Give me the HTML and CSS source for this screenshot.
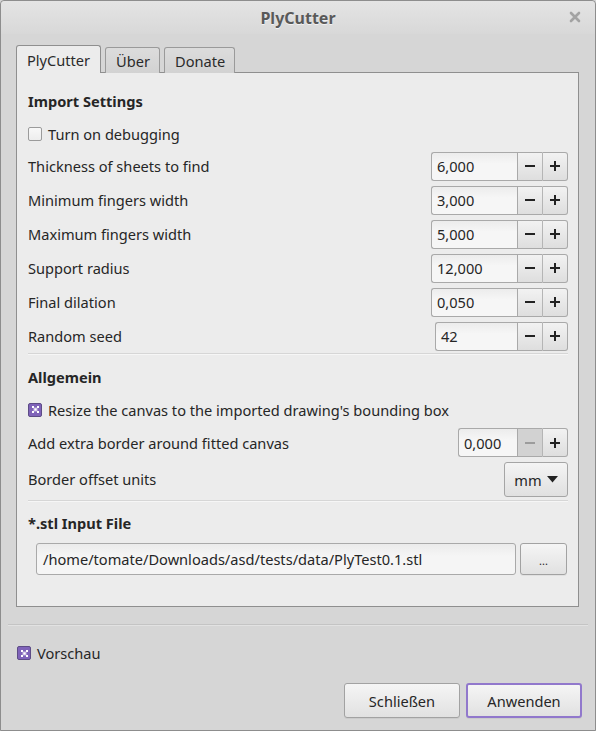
FILE: index.html
```html
<!DOCTYPE html>
<html>
<head>
<meta charset="utf-8">
<link rel="stylesheet" href="styles.css">
</head>
<body>
<div class="window">
  <div class="titlebar">
    <span class="title">PlyCutter</span>
    <svg class="close" width="12" height="12" viewBox="0 0 12 12"><path d="M2 2 L10 10 M10 2 L2 10" stroke="#a3a3a3" stroke-width="2.6" stroke-linecap="round"/></svg>
  </div>
  <div class="main">
    <div class="tabs">
      <div class="tab active">PlyCutter</div>
      <div class="tab">Über</div>
      <div class="tab">Donate</div>
    </div>
    <div class="panel">
      <div class="row heading h35">Import Settings</div>
      <div class="row h31"><span class="cb"></span><span class="cb-label">Turn on debugging</span></div>

      <div class="row h34"><span class="label">Thickness of sheets to find</span>
        <div class="spin"><div class="spin-input w85">6,000</div><div class="spin-btn"><svg width="12" height="12" viewBox="0 0 12 12"><path d="M1 6 H11" stroke="#222" stroke-width="2"/></svg></div><div class="spin-btn"><svg width="12" height="12" viewBox="0 0 12 12"><path d="M1 6 H11 M6 1 V11" stroke="#222" stroke-width="2"/></svg></div></div>
      </div>
      <div class="row h34"><span class="label">Minimum fingers width</span>
        <div class="spin"><div class="spin-input w85">3,000</div><div class="spin-btn"><svg width="12" height="12" viewBox="0 0 12 12"><path d="M1 6 H11" stroke="#222" stroke-width="2"/></svg></div><div class="spin-btn"><svg width="12" height="12" viewBox="0 0 12 12"><path d="M1 6 H11 M6 1 V11" stroke="#222" stroke-width="2"/></svg></div></div>
      </div>
      <div class="row h34"><span class="label">Maximum fingers width</span>
        <div class="spin"><div class="spin-input w85">5,000</div><div class="spin-btn"><svg width="12" height="12" viewBox="0 0 12 12"><path d="M1 6 H11" stroke="#222" stroke-width="2"/></svg></div><div class="spin-btn"><svg width="12" height="12" viewBox="0 0 12 12"><path d="M1 6 H11 M6 1 V11" stroke="#222" stroke-width="2"/></svg></div></div>
      </div>
      <div class="row h34"><span class="label">Support radius</span>
        <div class="spin"><div class="spin-input w85">12,000</div><div class="spin-btn"><svg width="12" height="12" viewBox="0 0 12 12"><path d="M1 6 H11" stroke="#222" stroke-width="2"/></svg></div><div class="spin-btn"><svg width="12" height="12" viewBox="0 0 12 12"><path d="M1 6 H11 M6 1 V11" stroke="#222" stroke-width="2"/></svg></div></div>
      </div>
      <div class="row h34"><span class="label">Final dilation</span>
        <div class="spin"><div class="spin-input w85">0,050</div><div class="spin-btn"><svg width="12" height="12" viewBox="0 0 12 12"><path d="M1 6 H11" stroke="#222" stroke-width="2"/></svg></div><div class="spin-btn"><svg width="12" height="12" viewBox="0 0 12 12"><path d="M1 6 H11 M6 1 V11" stroke="#222" stroke-width="2"/></svg></div></div>
      </div>
      <div class="row h34"><span class="label">Random seed</span>
        <div class="spin"><div class="spin-input w81">42</div><div class="spin-btn"><svg width="12" height="12" viewBox="0 0 12 12"><path d="M1 6 H11" stroke="#222" stroke-width="2"/></svg></div><div class="spin-btn"><svg width="12" height="12" viewBox="0 0 12 12"><path d="M1 6 H11 M6 1 V11" stroke="#222" stroke-width="2"/></svg></div></div>
      </div>

      <div class="sep sep1"></div>

      <div class="row heading h34">Allgemein</div>
      <div class="row h31"><span class="cb checked"><svg width="7" height="7" viewBox="0 0 7 7"><rect x="0" y="0" width="2" height="2" fill="#fff"/><rect x="5" y="0" width="2" height="2" fill="#fff"/><rect x="2.5" y="2.5" width="2" height="2" fill="#fff"/><rect x="0" y="5" width="2" height="2" fill="#fff"/><rect x="5" y="5" width="2" height="2" fill="#fff"/><rect x="1.5" y="1.5" width="4" height="4" fill="#fff" opacity="0.55"/></svg></span><span class="cb-label">Resize the canvas to the imported drawing's bounding box</span></div>
      <div class="row h35"><span class="label">Add extra border around fitted canvas</span>
        <div class="spin"><div class="spin-input w58">0,000</div><div class="spin-btn disabled"><svg width="12" height="12" viewBox="0 0 12 12"><path d="M1 6 H11" stroke="#9c9c9c" stroke-width="2"/></svg></div><div class="spin-btn"><svg width="12" height="12" viewBox="0 0 12 12"><path d="M1 6 H11 M6 1 V11" stroke="#222" stroke-width="2"/></svg></div></div>
      </div>
      <div class="row h38"><span class="label">Border offset units</span>
        <div class="combo">mm<svg width="11" height="7" viewBox="0 0 11 7"><path d="M0 0 H11 L5.5 6.5 Z" fill="#222"/></svg></div>
      </div>

      <div class="sep sep2"></div>

      <div class="row heading h34">*.stl Input File</div>
      <div class="file-row">
        <div class="file-input">/home/tomate/Downloads/asd/tests/data/PlyTest0.1.stl</div>
        <div class="btn browse">...</div>
      </div>
    </div>
  </div>
  <div class="sep bottom-sep"></div>
  <div class="preview-row"><span class="cb checked"><svg width="7" height="7" viewBox="0 0 7 7"><rect x="0" y="0" width="2" height="2" fill="#fff"/><rect x="5" y="0" width="2" height="2" fill="#fff"/><rect x="2.5" y="2.5" width="2" height="2" fill="#fff"/><rect x="0" y="5" width="2" height="2" fill="#fff"/><rect x="5" y="5" width="2" height="2" fill="#fff"/><rect x="1.5" y="1.5" width="4" height="4" fill="#fff" opacity="0.55"/></svg></span><span class="cb-label">Vorschau</span></div>
  <div class="buttons">
    <div class="btn action">Schließen</div>
    <div class="btn action default">Anwenden</div>
  </div>
</div>
</body>
</html>
```
FILE: styles.css
```css
html, body {
  margin: 0;
  padding: 0;
  background: #d6d6d6;
}
body {
  font-family: "Noto Sans", "Open Sans", sans-serif;
  font-size: 14.6px;
  color: #262626;
}
.window {
  box-sizing: border-box;
  width: 596px;
  height: 731px;
  border: 1px solid #8d8d8d;
  border-radius: 4px 4px 0 0;
  background: #d6d6d6;
  display: flex;
  flex-direction: column;
}
.titlebar {
  height: 33px;
  flex: none;
  display: flex;
  align-items: center;
  justify-content: center;
  position: relative;
  background: linear-gradient(#e4e4e4, #d8d8d8);
  border-radius: 4px 4px 0 0;
}
.title {
  font-weight: bold;
  font-size: 16px;
  color: #595959;
  text-shadow: 0 1px 0 #f2f2f2;
}
.close {
  position: absolute;
  right: 14px;
  top: 10px;
}
.main {
  padding: 12px 16px 0 15px;
  display: flex;
  flex-direction: column;
}
.tabs {
  display: flex;
  gap: 4px;
  height: 27px;
  position: relative;
  z-index: 1;
  margin-bottom: -1px;
}
.tab {
  box-sizing: border-box;
  padding: 0 9px 0 10px;
  border: 1px solid #9a9a9a;
  border-bottom: none;
  border-radius: 3px 3px 0 0;
  background: linear-gradient(#dcdcdc, #d2d2d2);
  display: flex;
  align-items: center;
  color: #2a2a2a;
  height: 26px;
  align-self: flex-end;
}
.tab.active {
  height: 28px;
  background: #ececec;
  padding: 0 10px 0 10px;
  border-color: #8f8f8f;
}
.panel {
  box-sizing: border-box;
  height: 535px;
  border: 1px solid #8f8f8f;
  background: #ececec;
  padding: 10px 10px 0 11px;
  display: flex;
  flex-direction: column;
}
.row {
  display: flex;
  align-items: center;
  justify-content: space-between;
  flex: none;
}
.h31 { height: 31px; justify-content: flex-start; }
.h34 { height: 34px; }
.h35 { height: 35px; }
.h38 { height: 38px; }
.heading {
  font-weight: bold;
  color: #262626;
}
.label { color: #262626; }
.cb {
  box-sizing: border-box;
  width: 14px;
  height: 14px;
  border: 1px solid #9b9b9b;
  border-radius: 2px;
  background: linear-gradient(#f8f8f8, #ededed);
  display: inline-flex;
  align-items: center;
  justify-content: center;
  flex: none;
}
.cb.checked {
  background: #7f63b9;
  border-color: #5d4c86;
}
.cb-label { margin-left: 6px; }
.spin {
  display: flex;
  height: 29px;
}
.spin-input {
  box-sizing: border-box;
  height: 29px;
  border: 1px solid #a9a9a9;
  border-right: none;
  border-radius: 3px 0 0 3px;
  background: linear-gradient(#ececec, #f6f6f6 40%, #f6f6f6);
  display: flex;
  align-items: center;
  padding-left: 5px;
  color: #262626;
}
.w85 { width: 86px; }
.w81 { width: 82px; }
.w58 { width: 59px; }
.spin-btn {
  box-sizing: border-box;
  width: 26px;
  height: 29px;
  border: 1px solid #a9a9a9;
  background: linear-gradient(#f2f2f2, #dedede);
  display: flex;
  align-items: center;
  justify-content: center;
}
.spin-btn + .spin-btn {
  border-left: 1px solid #b5b5b5;
  border-radius: 0 3px 3px 0;
  width: 26px;
}
.spin-input + .spin-btn { border-right: none; width: 25px; }
.spin-btn.disabled {
  background: #d2d2d2;
}
.sep {
  flex: none;
  height: 0;
  border-top: 1px solid #d6d6d6;
  border-bottom: 1px solid #f6f6f6;
}
.sep1 { margin: 0 0 5px 0; }
.sep2 { margin: 2px 0 4px 0; }
.combo {
  box-sizing: border-box;
  width: 64px;
  height: 35px;
  border: 1px solid #a5a5a5;
  border-radius: 3px;
  background: linear-gradient(#f4f4f4, #e0e0e0);
  display: flex;
  align-items: center;
  justify-content: center;
  gap: 5px;
  padding-top: 1px;
}
.file-row {
  display: flex;
  align-items: center;
  gap: 4px;
  padding-left: 8px;
  height: 37px;
  flex: none;
}
.file-input {
  box-sizing: border-box;
  width: 480px;
  height: 32px;
  border: 1px solid #a9a9a9;
  border-radius: 3px;
  background: linear-gradient(#ebebeb, #f5f5f5 40%, #f5f5f5);
  display: flex;
  align-items: center;
  padding-left: 6px;
}
.btn {
  box-sizing: border-box;
  border: 1px solid #a2a2a2;
  border-radius: 3px;
  background: linear-gradient(#f5f5f5, #e1e1e1);
  display: flex;
  align-items: center;
  justify-content: center;
  color: #262626;
  box-shadow: 0 1px 0 rgba(0,0,0,0.05);
}
.browse {
  width: 47px;
  height: 32px;
  font-size: 11px;
  padding-top: 4px;
}
.bottom-sep {
  margin: 17px 7px 0 7px;
  border-top: 1px solid #c4c4c4;
  border-bottom: 1px solid #e2e2e2;
}
.preview-row {
  display: flex;
  align-items: center;
  height: 26px;
  margin-top: 14px;
  padding-left: 16px;
}
.preview-row .cb-label { margin-left: 6px; }
.buttons {
  display: flex;
  justify-content: flex-end;
  gap: 6px;
  padding-right: 13px;
  margin-top: 17px;
}
.action {
  width: 116px;
  height: 35px;
}
.action.default {
  border: 2px solid #9178cc;
}
```
